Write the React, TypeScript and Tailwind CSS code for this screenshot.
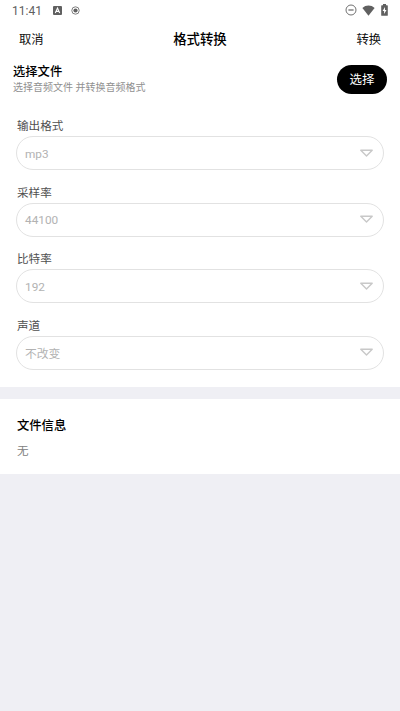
import React from 'react';

interface SelectFieldProps {
  label: string;
  value: string;
}

const SelectField: React.FC<SelectFieldProps> = ({ label, value }) => {
  return (
    <div className="h-[66.67px]">
      <div className="h-[22px] pl-px pt-px text-[11.6px] leading-[22px] text-[#505050]">{label}</div>
      <button className="flex h-[34px] w-full items-center justify-between rounded-full border border-[#e2e2e2] pl-2 pr-2.5 pt-px text-[11.8px] text-[#b2b2b2]">
        <span className="pt-0.5">{value}</span>
        <svg width="13" height="8" viewBox="0 0 13 8" fill="none" className="-mt-0.5">
          <path d="M.8 1.2h11.4L6.5 7z" stroke="#c8c8c8" strokeWidth="1.4" strokeLinejoin="round" />
        </svg>
      </button>
    </div>
  );
};

const StatusBar: React.FC = () => {
  return (
    <div className="flex h-5 items-center pl-3 pr-3 text-[#606060]">
      <span className="pt-px text-[12px] leading-5">11:41</span>
      <svg width="9" height="9" viewBox="0 0 9 9" className="ml-[11px]">
        <rect x="0" y="0" width="9" height="9" rx="1" fill="#606060" />
        <path d="M2.3 7 4.5 2 6.7 7M3.2 5.4h2.6" fill="none" stroke="#ffffff" strokeWidth="1.1" />
      </svg>
      <svg width="9" height="9" viewBox="0 0 9 9" className="ml-[9px]">
        <circle cx="4.5" cy="4.5" r="3.7" fill="none" stroke="#606060" strokeWidth="0.8" />
        <circle cx="4.5" cy="4.5" r="2.1" fill="#606060" />
      </svg>
      <div className="ml-auto flex items-center">
        <svg width="12" height="12" viewBox="0 0 12 12" fill="none" stroke="#707070">
          <circle cx="6" cy="6" r="5" />
          <path d="M3.4 6h5.2" strokeWidth="1.3" />
        </svg>
        <svg width="13" height="11" viewBox="0 0 13 11" className="ml-[5px]">
          <path d="M6.5 10.7.4 3C3.8-.3 9.2-.3 12.6 3z" fill="#606060" />
        </svg>
        <svg width="7" height="12" viewBox="0 0 7 12" className="ml-[6px]">
          <path d="M2 0h3v1.2h1.2q.6 0 .6.6v9.4q0 .6-.6.6H.8q-.6 0-.6-.6V1.8q0-.6.6-.6H2z" fill="#606060" />
          <path d="M4 3 1.6 7H3.1v3L5.5 6H4z" fill="#ffffff" />
        </svg>
      </div>
    </div>
  );
};

const fields: SelectFieldProps[] = [
  { label: '输出格式', value: 'mp3' },
  { label: '采样率', value: '44100' },
  { label: '比特率', value: '192' },
  { label: '声道', value: '不改变' },
];

const App: React.FC = () => {
  return (
    <div className="flex h-[711px] w-full flex-col bg-[#efeff4] font-['Roboto','Noto_Sans_CJK_SC',sans-serif]">
      <div className="h-[387px] bg-white">
        <StatusBar />
        <header className="grid h-[38px] grid-cols-3 items-center px-[19px] pt-0.5 text-[12.3px] text-[#111111]">
          <button className="text-left">取消</button>
          <h1 className="text-center text-[13.4px] font-medium text-black">格式转换</h1>
          <button className="text-right">转换</button>
        </header>
        <section className="flex h-[42px] items-center justify-between pl-[13px] pr-[13px]">
          <div>
            <h2 className="pt-px text-[12.3px] font-medium leading-[17px] text-black">选择文件</h2>
            <p className="text-[10px] leading-[14px] text-[#909090]">选择音频文件 并转换音频格式</p>
          </div>
          <button className="h-[29px] w-[50px] rounded-full bg-black pt-0.5 text-[12.5px] text-white">选择</button>
        </section>
        <div className="px-4 pt-[14px]">
          {fields.map((field) => (
            <SelectField key={field.label} label={field.label} value={field.value} />
          ))}
        </div>
      </div>
      <section className="mt-[12px] h-[75px] bg-white px-[17px] pt-[15px]">
        <h2 className="pt-px text-[12.3px] font-medium leading-[22px] text-black">文件信息</h2>
        <p className="mt-1 text-[11.6px] leading-5 text-[#808080]">无</p>
      </section>
    </div>
  );
};

export default App;
